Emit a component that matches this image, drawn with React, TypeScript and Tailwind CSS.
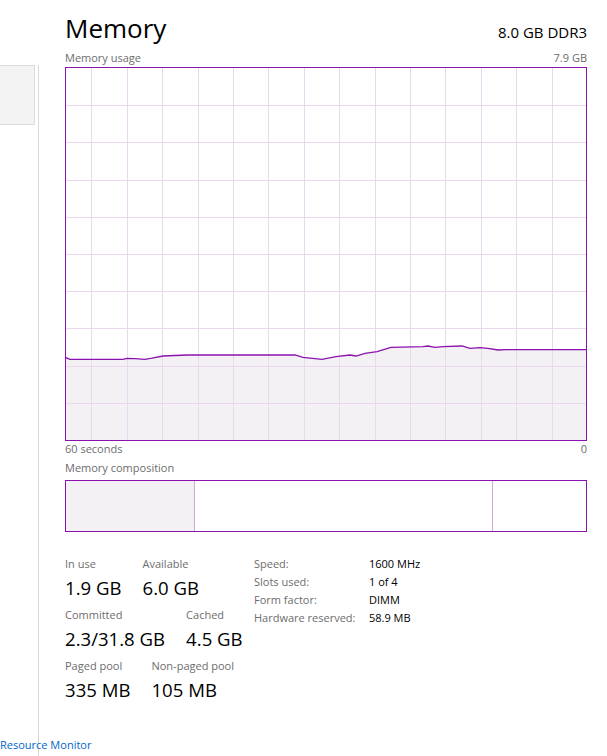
import React from "react";

const PURPLE = "#8b12ae";

const linePoints: [number, number][] = [
  [0, 289.7], [4, 291.3], [57, 291.3], [61, 290.3], [69, 290.6], [79, 291.3],
  [86, 290.2], [97, 288], [121, 287], [229, 287], [237, 289.3], [256, 291.3],
  [270, 288.7], [284, 287], [290, 288], [299, 285.3], [311, 283.7], [325, 279.3],
  [357, 278.7], [362, 278], [369, 279.3], [377, 278.7], [396, 278], [404, 280.3],
  [414, 279.7], [422, 280.3], [432, 282], [440, 281.7], [520, 281.7],
];

function UsageGraph() {
  const w = 520;
  const h = 372;
  const rows = Array.from({ length: 9 }, (_, i) => Math.round((i + 1) * 37.2) + 0.5);
  const cols = Array.from({ length: 14 }, (_, k) => Math.round(25.3 + k * 35.4) + 0.5);
  const line = linePoints.map(([x, y]) => `${x},${y}`).join(" ");
  const area = `0,${h} ${line} ${w},${h}`;
  return (
    <div className="w-[522px] h-[374px] border border-[#8b12ae]">
      <svg width={w} height={h} className="block">
        <polygon points={area} fill="#f3f1f4" />
        {rows.map((y) => (
          <line key={"r" + y} x1={0} x2={w} y1={y} y2={y} stroke="#e9d8ee" strokeWidth={1} />
        ))}
        {cols.map((x) => (
          <line key={"c" + x} x1={x} x2={x} y1={0} y2={h} stroke="#e9d8ee" strokeWidth={1} />
        ))}
        <polyline points={line} fill="none" stroke={PURPLE} strokeWidth={1.3} />
      </svg>
    </div>
  );
}

function Stat({ label, value }: { label: string; value: string }) {
  return (
    <div className="flex flex-col">
      <span className="text-[11px] leading-[14px] text-[#6d6d6d]">{label}</span>
      <span className="mt-[6px] text-[18.6px] leading-[22px] text-black">{value}</span>
    </div>
  );
}

const specs = [
  ["Speed:", "1600 MHz"],
  ["Slots used:", "1 of 4"],
  ["Form factor:", "DIMM"],
  ["Hardware reserved:", "58.9 MB"],
];

export default function App() {
  return (
    <div className="w-[607px] h-[756px] bg-white font-['Open_Sans',sans-serif] overflow-hidden">
      <div className="flex h-[716px]">
        <div className="pt-[15px]">
          <div className="w-[39px] h-[701px] border-r border-[#d9d9d9]">
            <div className="mt-[50px] w-[35px] h-[60px] bg-[#f3f3f3] border border-l-0 border-[#dcdcdc]" />
          </div>
        </div>

        <div className="ml-[26px] w-[522px] pt-[12px]">
          <div className="flex items-baseline justify-between">
            <span className="text-[26px] leading-[32px] text-black">Memory</span>
            <span className="text-[15px] text-black">8.0 GB DDR3</span>
          </div>

          <div className="mt-[7px] flex justify-between text-[11px] leading-[14px] text-[#6d6d6d]">
            <span>Memory usage</span>
            <span>7.9 GB</span>
          </div>

          <div className="mt-[2px]">
            <UsageGraph />
          </div>

          <div className="mt-[1px] flex justify-between text-[11px] leading-[14px] text-[#6d6d6d]">
            <span>60 seconds</span>
            <span>0</span>
          </div>

          <div className="mt-[5px] text-[11px] leading-[14px] text-[#6d6d6d]">Memory composition</div>

          <div className="mt-[5px] flex h-[52px] border border-[#8b12ae]">
            <div className="w-[128px] bg-[#f3f1f4]" />
            <div className="w-[298px] border-l border-[#cfa8de]" />
            <div className="flex-1 border-l border-[#cfa8de]" />
          </div>

          <div className="mt-[25px] flex">
            <div className="w-[189px] flex flex-col gap-[9px]">
              <div className="flex gap-[21px]">
                <Stat label="In use" value="1.9 GB" />
                <Stat label="Available" value="6.0 GB" />
              </div>
              <div className="flex gap-[21px]">
                <Stat label="Committed" value="2.3/31.8 GB" />
                <Stat label="Cached" value="4.5 GB" />
              </div>
              <div className="flex gap-[21px]">
                <Stat label="Paged pool" value="335 MB" />
                <Stat label="Non-paged pool" value="105 MB" />
              </div>
            </div>

            <div className="-mt-[2px] grid grid-cols-[115px_auto] content-start text-[11px] leading-[18px]">
              {specs.map(([k, v]) => (
                <React.Fragment key={k}>
                  <span className="text-[#6d6d6d]">{k}</span>
                  <span className="text-black">{v}</span>
                </React.Fragment>
              ))}
            </div>
          </div>
        </div>
      </div>

      <div className="mt-[22px] text-[11px] leading-[14px] text-[#0066cc]">Resource Monitor</div>
    </div>
  );
}
